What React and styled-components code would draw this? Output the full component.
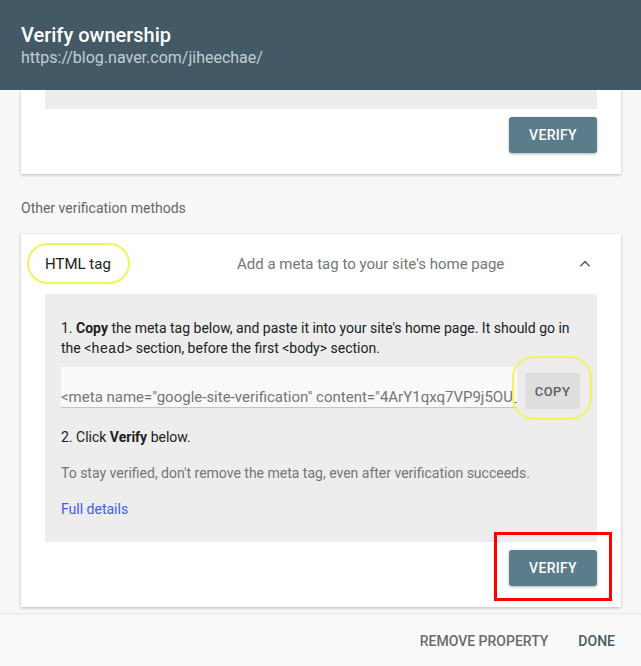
import React from "react";
import styled, { createGlobalStyle } from "styled-components";

const Global = createGlobalStyle`
  html, body { margin: 0; padding: 0; }
  body {
    background: #f8f8f8;
    font-family: Roboto, "Noto Sans", Arial, sans-serif;
    -webkit-font-smoothing: antialiased;
  }
`;

const Page = styled.div`
  width: 641px;
  height: 666px;
  display: flex;
  flex-direction: column;
  overflow: hidden;
  background: #f8f8f8;
`;

const Header = styled.header`
  height: 90px;
  flex: none;
  box-sizing: border-box;
  background: #435a66;
  padding: 23px 0 0 21px;
  position: relative;
  z-index: 2;
`;

const Title = styled.h1`
  margin: 0;
  font-size: 20px;
  line-height: 24px;
  font-weight: 500;
  color: #ffffff;
`;

const Url = styled.div`
  margin-top: 0px;
  font-size: 16px;
  line-height: 22px;
  color: #c3ccd1;
`;

const Content = styled.main`
  flex: 1;
  overflow: hidden;
  padding: 0 20px 0 21px;
  display: flex;
  flex-direction: column;
`;

const Card = styled.section`
  background: #ffffff;
  box-shadow: 0 1px 3px rgba(0, 0, 0, 0.25);
  position: relative;
  margin-top: ${(p) => p.$mt || 0}px;
  padding: 0 24px 21px;
  display: flex;
  flex-direction: column;
`;

const GrayBox = styled.div`
  background: #ededed;
  height: ${(p) => (p.$h ? `${p.$h}px` : "auto")};
  padding: ${(p) => (p.$h ? "0" : "24px 17px 23px 16px")};
  display: flex;
  flex-direction: column;
`;

const ButtonRow = styled.div`
  display: flex;
  justify-content: flex-end;
  margin-top: 8px;
  position: relative;
`;

const RaisedButton = styled.button`
  height: 36px;
  width: 88px;
  border: none;
  border-radius: 3px;
  background: #5a7c8b;
  color: #ffffff;
  font-family: Roboto, Arial, sans-serif;
  font-size: 14px;
  font-weight: 500;
  letter-spacing: 0.3px;
  box-shadow: 0 1px 3px rgba(0, 0, 0, 0.3);
  padding: 0;
`;

const SectionLabel = styled.div`
  margin-top: 26px;
  font-size: 14px;
  line-height: 16px;
  color: #666666;
`;

const MethodHeader = styled.div`
  height: 60px;
  display: flex;
  align-items: center;
  position: relative;
`;

const MethodName = styled.div`
  width: 192px;
  font-size: 15px;
  color: #212121;
`;

const MethodDesc = styled.div`
  flex: 1;
  font-size: 15px;
  color: #757575;
`;

const Chevron = styled.svg`
  width: 14px;
  height: 14px;
  margin-right: 5px;
`;

const Para = styled.p`
  margin: ${(p) => p.$mt || 0}px 0 0;
  font-size: 14px;
  line-height: 20px;
  color: ${(p) => (p.$muted ? "#757575" : "#212121")};
`;

const Mono = styled.code`
  font-family: "Liberation Mono", "DejaVu Sans Mono", monospace;
  font-size: 14px;
`;

const TagRow = styled.div`
  margin-top: 8px;
  display: flex;
  align-items: flex-start;
  gap: 8px;
  position: relative;
`;

const TagField = styled.div`
  width: 456px;
  height: 41px;
  box-sizing: border-box;
  background: #f9f9f9;
  border-bottom: 1px solid #c4c4c4;
  padding: 21px 0 0 0;
  font-size: 15px;
  line-height: 18px;
  color: #757575;
  white-space: nowrap;
  overflow: hidden;
`;

const FlatButton = styled.button`
  margin-top: 6px;
  height: 36px;
  width: 55px;
  border: none;
  border-radius: 3px;
  background: #dedede;
  color: #5f5f5f;
  font-family: Roboto, Arial, sans-serif;
  font-size: 13px;
  font-weight: 500;
  letter-spacing: 0.5px;
  padding: 0;
`;

const Link = styled.a`
  display: block;
  margin-top: 16px;
  font-size: 14px;
  line-height: 20px;
  color: #3d5afe;
  text-decoration: none;
`;

const Highlight = styled.div`
  position: absolute;
  left: ${(p) => p.$l}px;
  top: ${(p) => p.$t}px;
  width: ${(p) => p.$w}px;
  height: ${(p) => p.$h}px;
  border: 2.5px solid #f2f25a;
  border-radius: ${(p) => p.$r}px;
  box-sizing: border-box;
  filter: blur(0.4px);
  pointer-events: none;
`;

const RedBox = styled.div`
  position: absolute;
  right: -15px;
  top: -18px;
  width: 118px;
  height: 69px;
  border: 3px solid #ff0000;
  box-sizing: border-box;
  pointer-events: none;
`;

const Footer = styled.footer`
  height: 51px;
  flex: none;
  background: #fafafa;
  border-top: 1px solid #ececec;
  box-shadow: 0 -1px 2px rgba(0, 0, 0, 0.05);
  display: flex;
  align-items: center;
  justify-content: flex-end;
  padding-right: 26px;
  gap: 30px;
`;

const TextButton = styled.button`
  border: none;
  background: none;
  padding: 0;
  font-family: Roboto, Arial, sans-serif;
  font-size: 14px;
  font-weight: 500;
  color: ${(p) => (p.$primary ? "#455a64" : "#6b6b6b")};
`;

export default function App() {
  return (
    <Page>
      <Global />
      <Header>
        <Title>Verify ownership</Title>
        <Url>https://blog.naver.com/jiheechae/</Url>
      </Header>
      <Content>
        <Card>
          <GrayBox $h={19} />
          <ButtonRow>
            <RaisedButton>VERIFY</RaisedButton>
          </ButtonRow>
        </Card>

        <SectionLabel>Other verification methods</SectionLabel>

        <Card $mt={18}>
          <MethodHeader>
            <Highlight $l={-18} $t={9} $w={103} $h={41} $r={21} />
            <MethodName>HTML tag</MethodName>
            <MethodDesc>Add a meta tag to your site's home page</MethodDesc>
            <Chevron viewBox="0 0 24 24">
              <path d="M4 16 L12 8 L20 16" fill="none" stroke="#616161" strokeWidth="2.6" />
            </Chevron>
          </MethodHeader>
          <GrayBox>
            <Para>
              1. <b>Copy</b> the meta tag below, and paste it into your site's home page. It
              should go in the &lt;<Mono>head</Mono>&gt; section, before the first &lt;body&gt; section.
            </Para>
            <TagRow>
              <TagField>
                &lt;meta name="google-site-verification" content="4ArY1qxq7VP9j5OU_3xZtm0c8Hqk" /&gt;
              </TagField>
              <FlatButton>COPY</FlatButton>
              <Highlight $l={451} $t={-11} $w={80} $h={64} $r={22} />
            </TagRow>
            <Para $mt={18}>
              2. Click <b>Verify</b> below.
            </Para>
            <Para $mt={16} $muted>
              To stay verified, don't remove the meta tag, even after verification succeeds.
            </Para>
            <Link href="#">Full details</Link>
          </GrayBox>
          <ButtonRow>
            <RaisedButton>VERIFY</RaisedButton>
            <RedBox />
          </ButtonRow>
        </Card>
      </Content>
      <Footer>
        <TextButton>REMOVE PROPERTY</TextButton>
        <TextButton $primary>DONE</TextButton>
      </Footer>
    </Page>
  );
}
